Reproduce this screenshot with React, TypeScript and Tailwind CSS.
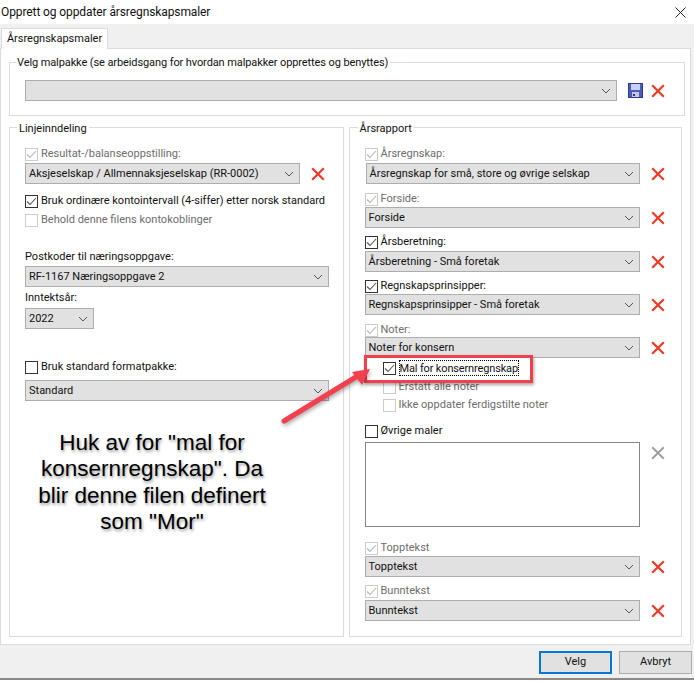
import React from "react";

function Chevron() {
  return (
    <svg width="10" height="6" viewBox="0 0 10 6" className="shrink-0" fill="none">
      <path d="M1 1 L5 5 L9 1" stroke="#555555" strokeWidth="1" />
    </svg>
  );
}

function Select({ text, className }: { text?: string; className: string }) {
  return (
    <div className={"flex h-[21px] items-center justify-between border border-[#adadad] bg-[#e1e1e1] pl-[3px] pr-[3px] text-[#111111] " + className}>
      <span className="whitespace-nowrap pt-[1px]">{text}</span>
      <span className="flex w-[14px] justify-center"><Chevron /></span>
    </div>
  );
}

function RedX({ className = "" }: { className?: string }) {
  return (
    <svg width="14" height="14" viewBox="0 0 14 14" className={"shrink-0 " + className}>
      <path d="M1.2 1.2 L12.8 12.8 M12.8 1.2 L1.2 12.8" stroke="#ee3b24" strokeWidth="2.2" />
    </svg>
  );
}

function Check({ checked, disabled, label, className = "", focus }: { checked?: boolean; disabled?: boolean; label: string; className?: string; focus?: boolean }) {
  return (
    <div className={"flex h-[14px] items-center " + className}>
      <span className={"mr-[3px] flex h-[13px] w-[13px] shrink-0 items-center justify-center border " + (disabled ? "border-[#cccccc] bg-white" : "border-[#333333] bg-white")}>
        {checked && (
          <svg width="11" height="9" viewBox="0 0 11 9" fill="none">
            <path d="M1 4.5 L4 7.5 L10 1" stroke={disabled ? "#b5b5b5" : "#555555"} strokeWidth="1.1" />
          </svg>
        )}
      </span>
      <span className={"whitespace-nowrap pt-[1px] " + (disabled ? "text-[#6d6d6d] " : "text-[#111111] ") + (focus ? "border border-dotted border-black pt-0 leading-[13px] tracking-[-0.15px]" : "")}>{label}</span>
    </div>
  );
}

function SelectRow({ text, w, className = "", x = "ml-[11px]" }: { text: string; w: string; className?: string; x?: string }) {
  return (
    <div className={"flex items-center " + className}>
      <Select text={text} className={w} />
      <RedX className={x} />
    </div>
  );
}

function Group({ label, className, labelClass, children }: { label: string; className: string; labelClass: string; children: React.ReactNode }) {
  return (
    <div className={"relative border border-[#dcdcdc] " + className}>
      <span className={"absolute whitespace-nowrap bg-white leading-[18px] text-[#111111] " + labelClass}>{label}</span>
      {children}
    </div>
  );
}

function Button({ label, primary, className = "" }: { label: string; primary?: boolean; className?: string }) {
  return (
    <div className={"flex h-[23px] w-[73px] items-center justify-center bg-[#e1e1e1] text-[#111111] " + (primary ? "border-2 border-[#0078d7] " : "border border-[#adadad] ") + className}>
      {label}
    </div>
  );
}

export default function App() {
  return (
    <div className="relative h-[681px] w-[694px] overflow-hidden bg-white text-[11px] [font-family:'Roboto','Liberation_Sans',sans-serif]">
      <div className="flex h-[24px] items-center justify-between pl-[1px] pr-[8px] text-[12px] text-[#111111]">
        <span className="tracking-[-0.1px]">Opprett og oppdater årsregnskapsmaler</span>
        <svg width="11" height="11" viewBox="0 0 11 11" fill="none"><path d="M0.5 0.5 L10.5 10.5 M10.5 0.5 L0.5 10.5" stroke="#222222" /></svg>
      </div>
      <div className="flex h-[656px] flex-col border-b-2 border-[#8a8a8a] bg-[#f0f0f0]">
        <div className="flex h-[24px] items-end pl-[1px]">
          <div className="z-10 mb-[-1px] flex h-[21px] w-[107px] items-center justify-center border border-b-0 border-[#dcdcdc] bg-white text-[#111111]">Årsregnskapsmaler</div>
        </div>
        <div className="h-[597px] w-[691px] border border-[#dcdcdc] bg-white px-[8px] pt-[13px]">
          <Group label="Velg malpakke (se arbeidsgang for hvordan malpakker opprettes og benyttes)" labelClass="left-[6px] top-[-9px] pl-[1px] pr-[2px] tracking-[-0.1px]" className="h-[54px] w-[676px] pl-[15px] pt-[17px]">
            <div className="flex items-center">
              <Select className="w-[592px]" />
              <svg width="15" height="15" viewBox="0 0 15 15" className="ml-[11px] shrink-0">
                <rect x="0.5" y="0.5" width="14" height="14" fill="#4a5cc4" stroke="#2f3a8f" />
                <rect x="3" y="1" width="9" height="6" fill="#c9cff5" />
                <rect x="4" y="9" width="7" height="5" fill="#c8c8d4" />
                <rect x="5" y="11" width="2" height="2" fill="#27327f" />
              </svg>
              <RedX className="ml-[8px]" />
            </div>
          </Group>
          <div className="mt-[11px] flex gap-[5px]">
            <Group label="Linjeinndeling" labelClass="left-[7px] top-[-8px] px-[2px]" className="h-[510px] w-[336px] pl-[15px] pt-[19px]">
              <Check checked disabled label="Resultat-/balanseoppstilling:" />
              <SelectRow text="Aksjeselskap / Allmennaksjeselskap (RR-0002)" w="w-[275px]" className="mt-[2px]" />
              <Check checked label="Bruk ordinære kontointervall (4-siffer) etter norsk standard" className="mt-[10px]" />
              <Check disabled label="Behold denne filens kontokoblinger" className="mt-[5px]" />
              <div className="mt-[21px] h-[18px] leading-[18px] text-[#111111]">Postkoder til næringsoppgave:</div>
              <Select text="RF-1167 Næringsoppgave 2" className="w-[304px]" />
              <div className="mt-[2px] h-[18px] leading-[18px] text-[#111111]">Inntektsår:</div>
              <Select text="2022" className="mt-[1px] w-[69px]" />
              <Check label="Bruk standard formatpakke:" className="mt-[31px]" />
              <Select text="Standard" className="mt-[6px] w-[304px]" />
            </Group>
            <Group label="Årsrapport" labelClass="left-[8px] top-[-8px] px-[2px]" className="h-[510px] w-[335px] pl-[15px] pt-[19px]">
              <Check checked disabled label="Årsregnskap:" />
              <SelectRow text="Årsregnskap for små, store og øvrige selskap" w="ml-[1px] w-[274px]" className="mt-[2px]" />
              <Check checked disabled label="Forside:" className="mt-[8px]" />
              <SelectRow text="Forside" w="w-[275px]" className="mt-[1px]" />
              <Check checked label="Årsberetning:" className="mt-[7px]" />
              <SelectRow text="Årsberetning - Små foretak" w="w-[275px]" className="mt-[2px]" />
              <Check checked label="Regnskapsprinsipper:" className="mt-[7px]" />
              <SelectRow text="Regnskapsprinsipper - Små foretak" w="w-[275px]" className="mt-[1px]" />
              <Check checked disabled label="Noter:" className="mt-[8px]" />
              <SelectRow text="Noter for konsern" w="w-[275px]" />
              <Check checked label="Mal for konsernregnskap" className="ml-[18px] mt-[3px]" focus />
              <Check disabled label="Erstatt alle noter" className="ml-[18px] mt-[5px]" />
              <Check disabled label="Ikke oppdater ferdigstilte noter" className="ml-[18px] mt-[4px]" />
              <Check label="Øvrige maler" className="mt-[12px]" />
              <div className="mt-[4px] flex items-start">
                <div className="h-[85px] w-[275px] border border-[#828790] bg-white" />
                <svg width="14" height="14" viewBox="0 0 14 14" className="ml-[11px] mt-[4px] shrink-0">
                  <path d="M1.2 1.2 L12.8 12.8 M12.8 1.2 L1.2 12.8" stroke="#a0a0a0" strokeWidth="2" />
                </svg>
              </div>
              <Check checked disabled label="Topptekst" className="mt-[14px]" />
              <SelectRow text="Topptekst" w="w-[275px]" className="mt-[1px]" />
              <Check checked disabled label="Bunntekst" className="mt-[7px]" />
              <SelectRow text="Bunntekst" w="w-[275px]" className="mt-[2px]" />
            </Group>
          </div>
        </div>
        <div className="flex justify-end gap-[7px] pr-[2px] pt-[6px]">
          <Button label="Velg" primary />
          <Button label="Avbryt" />
        </div>
      </div>

      <div className="absolute left-[364px] top-[355px] h-[28px] w-[169px] border-[3px] border-[#f2404f] shadow-[1px_2px_3px_rgba(0,0,0,0.35)]" />
      <svg width="110" height="80" viewBox="0 0 110 80" className="absolute left-[270px] top-[355px]" style={{ filter: "drop-shadow(1px 2px 2px rgba(0,0,0,0.35))" }}>
        <path d="M14 66 L86 22" stroke="#f2404f" strokeWidth="5" strokeLinecap="round" />
        <path d="M100 14 L82 17 L92 30 Z" fill="#f2404f" />
      </svg>
      <div className="absolute left-[32px] top-[430px] w-[240px] text-center text-[22.5px] leading-[26.4px] text-black [font-family:'Liberation_Sans',sans-serif] [text-shadow:1px_2px_3px_rgba(0,0,0,0.4)]">
        Huk av for "mal for konsernregnskap". Da blir denne filen definert som "Mor"
      </div>
    </div>
  );
}
